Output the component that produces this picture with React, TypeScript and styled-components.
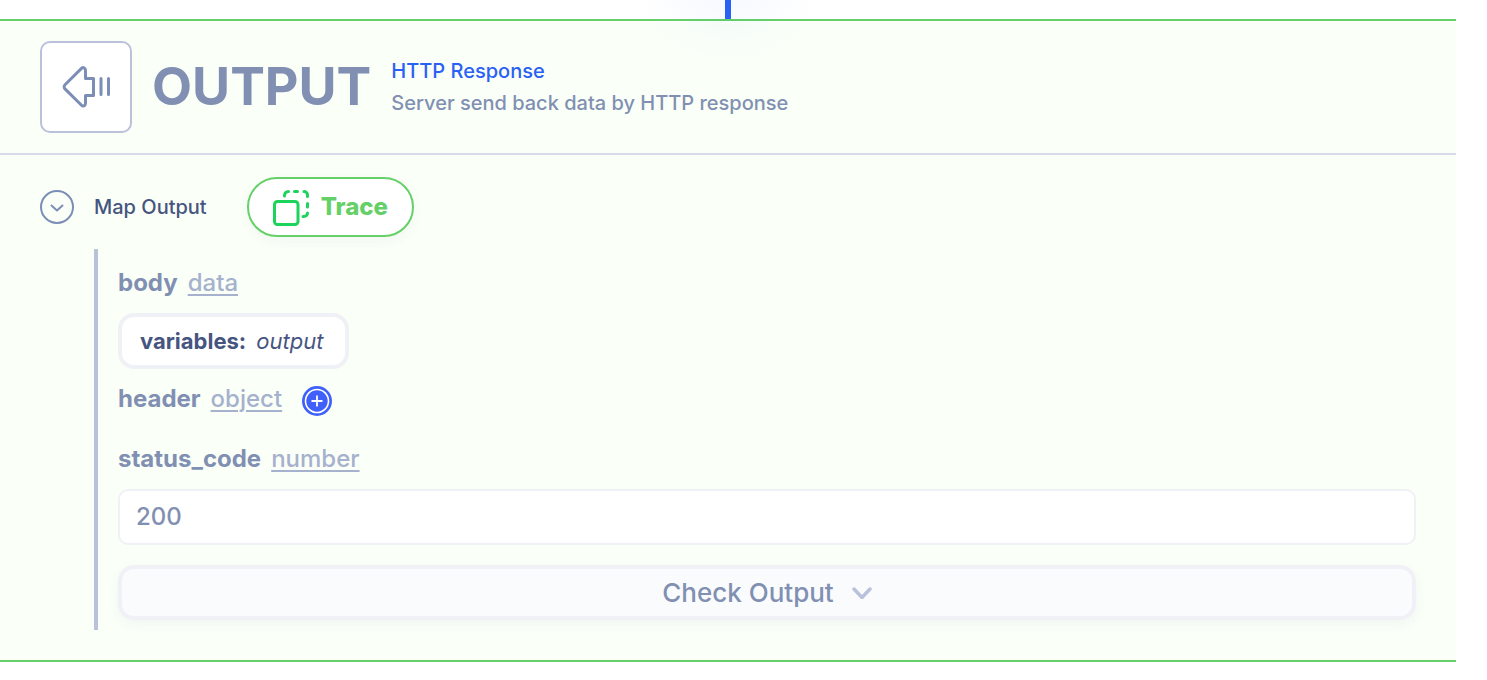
import React, { useState } from "react";
import styled, { createGlobalStyle } from "styled-components";

const color = {
  green: "#66d068",
  vividGreen: "#1cd45c",
  blue: "#2961f5",
  text: "#46557f",
  muted: "#8190b2",
  soft: "#a6b1cd",
  line: "#bac2db",
  frame: "#f0f1f6",
  panel: "#fafff8",
};

const GlobalStyle = createGlobalStyle`
  *, *::before, *::after { box-sizing: border-box; }
  body {
    margin: 0;
    background: #ffffff;
    color: ${color.text};
    font-family: Inter, "Liberation Sans", sans-serif;
  }
  button, input { font: inherit; margin: 0; }
  button { cursor: pointer; }
`;

const Page = styled.main`
  padding-right: 31px;
`;

const Connector = styled.div`
  position: relative;
  width: 6px;
  height: 19px;
  margin: 0 auto;
  background: ${color.blue};

  &::after {
    content: "";
    position: absolute;
    left: -97px;
    top: -136px;
    width: 200px;
    height: 200px;
    border-radius: 50%;
    background: radial-gradient(closest-side, rgba(41, 97, 245, 0.05), rgba(41, 97, 245, 0.035) 40%, rgba(41, 97, 245, 0.008) 80%, rgba(41, 97, 245, 0));
    pointer-events: none;
  }
`;

const Panel = styled.section`
  border-top: 2px solid ${color.green};
  border-bottom: 2px solid ${color.green};
  background: ${color.panel};
`;

const PanelHeader = styled.header`
  display: flex;
  align-items: center;
  gap: 20px;
  padding: 20px 40px;
  border-bottom: 2px solid #d7dae8;
`;

const IconBox = styled.div`
  display: flex;
  align-items: center;
  justify-content: center;
  width: 92px;
  height: 92px;
  border: 2px solid ${color.line};
  border-radius: 10px;
  background: #ffffff;
`;

const Title = styled.h1`
  margin: 0;
  color: ${color.muted};
  font-size: 52px;
  font-weight: 700;
  line-height: 64px;
`;

const Summary = styled.div`
  display: flex;
  flex-direction: column;
  font-size: 20px;
  font-weight: 500;
  line-height: 32px;
`;

const Kind = styled.span`
  color: ${color.blue};
`;

const Description = styled.span`
  color: ${color.muted};
`;

const PanelBody = styled.div`
  padding: 22px 40px 30px;
`;

const Toolbar = styled.div`
  display: flex;
  align-items: center;
  margin-bottom: 12px;
`;

const CollapseButton = styled.button`
  display: flex;
  padding: 0;
  border: 0;
  background: none;
`;

const ToolbarLabel = styled.span`
  margin: 0 40px 0 20px;
  font-size: 20px;
  font-weight: 500;
  line-height: 32px;
`;

const TraceButton = styled.button`
  display: flex;
  align-items: center;
  gap: 10px;
  height: 60px;
  padding: 0 24px 2px;
  border: 2px solid ${color.green};
  border-radius: 30px;
  background: #ffffff;
  box-shadow: 0 4px 12px rgba(70, 85, 127, 0.05);
  color: ${color.green};
  font-size: 24px;
  font-weight: 800;
`;

const Fields = styled.div`
  margin-left: 54px;
  padding: 4px 0 10px 20px;
  border-left: 4px solid ${color.line};
`;

const FieldRow = styled.div`
  display: flex;
  align-items: center;
  gap: 10px;
  height: 60px;
  padding-bottom: 2px;
  font-size: 24px;
`;

const FieldName = styled.label`
  color: ${color.muted};
  font-weight: 700;
`;

const TypeLink = styled.a`
  color: ${color.soft};
  font-weight: 500;
  text-decoration: underline;
  text-decoration-thickness: 2px;
  text-underline-offset: 3px;
`;

const AddButton = styled.button`
  display: flex;
  margin: 6px 0 0 10px;
  padding: 0;
  border: 0;
  background: none;
`;

const VariableChip = styled.button`
  display: flex;
  align-items: center;
  gap: 10px;
  height: 56px;
  padding: 0 22px 0 18px;
  border: 4px solid ${color.frame};
  border-radius: 16px;
  background: #ffffff;
  color: ${color.text};
  font-size: 22px;
`;

const NumberInput = styled.input`
  display: block;
  width: 100%;
  height: 56px;
  padding: 0 16px 2px;
  border: 2px solid ${color.frame};
  border-radius: 10px;
  background: #ffffff;
  color: ${color.muted};
  font-size: 24px;
  font-weight: 500;
  outline: none;
`;

const CheckButton = styled.button`
  display: flex;
  align-items: center;
  justify-content: center;
  gap: 18px;
  width: 100%;
  height: 55px;
  margin-top: 20px;
  border: 4px solid ${color.frame};
  border-radius: 16px;
  background: #fafbfd;
  box-shadow: 0 4px 12px rgba(70, 85, 127, 0.05);
  color: ${color.muted};
  font-size: 26px;
  font-weight: 500;
`;

const OutputIcon = () => (
  <svg width="50" height="42" viewBox="0 0 50 42" fill="none" stroke="#7c8eb5" strokeWidth="3" strokeLinecap="round" strokeLinejoin="round" aria-hidden="true">
    <path d="M20.500 2.400 4 18.700a3 3 0 0 0 0 4.200L20.500 39.200c1.500 1.500 4 .6 4-1.900V29.500h8v-17h-8V4.300c0-2.500-2.500-3.400-4-1.900Z" />
    <path d="M40 12.500v16M47.500 12.500v16" />
  </svg>
);

const CollapseIcon = () => (
  <svg width="34" height="34" viewBox="0 0 34 34" fill="none" stroke="#7c8eb5" strokeWidth="2" strokeLinecap="round" strokeLinejoin="round" aria-hidden="true">
    <circle cx="17" cy="17" r="16" />
    <path d="m11.500 15.500 5.500 5 5.500-5" />
  </svg>
);

const TraceIcon = () => (
  <svg width="38" height="40" viewBox="0 0 38 40" fill="none" stroke={color.vividGreen} strokeWidth="3" strokeLinecap="round" strokeLinejoin="round" aria-hidden="true">
    <rect x="1.500" y="15.500" width="23.500" height="23" rx="3" />
    <path d="M11.500 10V9.500a4 4 0 0 1 4-4M21.500 5.500h3M31 5.500a3.500 3.500 0 0 1 3.500 3.500v1.500M34.500 17.500v3.500M34.500 27a3.500 3.500 0 0 1-3.500 3.500h-1" />
  </svg>
);

const AddIcon = () => (
  <svg width="30" height="30" viewBox="0 0 30 30" fill="none" aria-hidden="true">
    <circle cx="15" cy="15" r="15" fill="#4060fa" />
    <circle cx="15" cy="15" r="11.500" stroke="#ffffff" strokeWidth="1.600" />
    <path d="M15 9.500v11M9.500 15h11" stroke="#ffffff" strokeWidth="1.800" />
  </svg>
);

const ChevronIcon = () => (
  <svg width="20" height="12" viewBox="0 0 20 12" fill="none" stroke={color.line} strokeWidth="3.500" strokeLinecap="round" strokeLinejoin="round" aria-hidden="true">
    <path d="m2 2 8 8.500 8-8.500" />
  </svg>
);

export default function App() {
  const [status, setStatus] = useState("200");

  return (
    <>
      <GlobalStyle />
      <Page>
        <Connector />
        <Panel>
          <PanelHeader>
            <IconBox>
              <OutputIcon />
            </IconBox>
            <Title>OUTPUT</Title>
            <Summary>
              <Kind>HTTP Response</Kind>
              <Description>Server send back data by HTTP response</Description>
            </Summary>
          </PanelHeader>
          <PanelBody>
            <Toolbar>
              <CollapseButton type="button" aria-label="Collapse">
                <CollapseIcon />
              </CollapseButton>
              <ToolbarLabel>Map Output</ToolbarLabel>
              <TraceButton type="button">
                <TraceIcon />
                Trace
              </TraceButton>
            </Toolbar>
            <Fields>
              <FieldRow>
                <FieldName htmlFor="body">body</FieldName>
                <TypeLink href="#data">data</TypeLink>
              </FieldRow>
              <VariableChip type="button" id="body">
                <strong>variables:</strong>
                <em>output</em>
              </VariableChip>
              <FieldRow>
                <FieldName htmlFor="header">header</FieldName>
                <TypeLink href="#object">object</TypeLink>
                <AddButton type="button" id="header" aria-label="Add header">
                  <AddIcon />
                </AddButton>
              </FieldRow>
              <FieldRow>
                <FieldName htmlFor="status_code">status_code</FieldName>
                <TypeLink href="#number">number</TypeLink>
              </FieldRow>
              <NumberInput
                id="status_code"
                inputMode="numeric"
                value={status}
                onChange={(event) => setStatus(event.target.value)}
              />
              <CheckButton type="button">
                Check Output
                <ChevronIcon />
              </CheckButton>
            </Fields>
          </PanelBody>
        </Panel>
      </Page>
    </>
  );
}
